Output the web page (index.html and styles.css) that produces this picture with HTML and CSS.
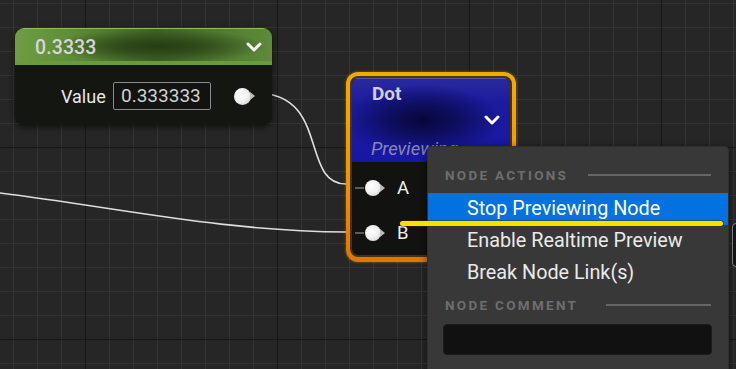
FILE: index.html
```html
<!DOCTYPE html>
<html>
<head>
<meta charset="utf-8">
<link rel="stylesheet" href="styles.css">
</head>
<body>
<div class="canvas">
  <svg class="wires" width="736" height="369" viewBox="0 0 736 369">
    <path d="M256 93 C 330 93, 300 184, 346 184" />
    <path d="M0 193 C 120 208, 220 231, 346 232" />
  </svg>

  <div class="node const-node">
    <div class="node-header green">
      <span class="const-title">0.3333</span>
      <svg class="chevron" width="16" height="10" viewBox="0 0 16 10"><path d="M2 2 L8 8 L14 2" /></svg>
    </div>
    <div class="const-body">
      <span class="value-label">Value</span>
      <span class="value-input">0.333333</span>
      <span class="pin"><span class="pin-ball"></span><span class="pin-arrow"></span></span>
    </div>
  </div>

  <div class="node dot-node">
    <div class="dot-inner">
      <div class="node-header blue">
        <div class="dot-title">Dot</div>
        <div class="chev-row">
          <svg class="chevron" width="16" height="10" viewBox="0 0 16 10"><path d="M2 2 L8 8 L14 2" /></svg>
        </div>
        <div class="dot-sub">Previewing</div>
      </div>
      <div class="dot-body">
        <div class="in-row"><span class="stub"></span><span class="pin"><span class="pin-ball small"></span><span class="pin-arrow"></span></span><span class="pin-label">A</span></div>
        <div class="in-row"><span class="stub"></span><span class="pin"><span class="pin-ball small"></span><span class="pin-arrow"></span></span><span class="pin-label">B</span></div>
      </div>
    </div>
  </div>

  <div class="edge-node"></div>

  <div class="menu">
    <div class="section first"><span class="section-title">NODE ACTIONS</span><span class="section-line"></span></div>
    <div class="item active">Stop Previewing Node</div>
    <div class="item">Enable Realtime Preview</div>
    <div class="item">Break Node Link(s)</div>
    <div class="section second"><span class="section-title">NODE COMMENT</span><span class="section-line"></span></div>
    <div class="comment-box"></div>
    <div class="section third"><span class="section-title">GENERAL</span><span class="section-line"></span></div>
  </div>

  <div class="annotation"></div>
</div>
</body>
</html>
```
FILE: styles.css
```css
* { box-sizing: border-box; }
html, body { margin: 0; padding: 0; }
body {
  width: 736px;
  height: 369px;
  overflow: hidden;
  font-family: Roboto, "Noto Sans", "Liberation Sans", sans-serif;
  background: #262626;
}
.canvas {
  position: relative;
  width: 736px;
  height: 369px;
  overflow: hidden;
  background-color: #262626;
  background-image:
    linear-gradient(to right, #171717 1px, transparent 1px),
    linear-gradient(to bottom, #171717 1px, transparent 1px),
    linear-gradient(to right, #343434 1px, transparent 1px),
    linear-gradient(to bottom, #343434 1px, transparent 1px);
  background-size: 192px 192px, 192px 192px, 24px 24px, 24px 24px;
  background-position: 85px 0, 0 147px, 13px 0, 0 3px;
}
.wires {
  position: absolute;
  left: 0;
  top: 0;
}
.wires path {
  fill: none;
  stroke: #dedede;
  stroke-width: 1.6;
}

.node {
  position: absolute;
}
.chevron path {
  fill: none;
  stroke: #ffffff;
  stroke-width: 3;
  stroke-linecap: round;
  stroke-linejoin: round;
}

/* constant node */
.const-node {
  left: 15px;
  top: 28px;
  width: 257px;
  height: 97px;
  border-radius: 9px;
  background: #141612;
  box-shadow: 0 2px 6px rgba(0,0,0,0.6);
  overflow: hidden;
}
.node-header.green {
  height: 37px;
  display: flex;
  align-items: center;
  justify-content: space-between;
  padding: 0 10px 0 20px;
  border-top: 1px solid #8fba60;
  background:
    radial-gradient(ellipse 42% 48% at 56% 48%, #263d14 0%, #2f4a19 35%, rgba(60,95,35,0) 100%),
    linear-gradient(to right, #6e9e42 0%, #5e8c38 22%, #40632a 55%, #567f34 85%, #5e8a3a 100%);
  box-shadow: inset 0 -4px 0 #6a9a3e;
}
.const-title {
  font-size: 19.5px;
  font-weight: 500;
  color: #d6d6d6;
  letter-spacing: 0.1px;
}
.const-body {
  display: flex;
  align-items: center;
  padding: 17px 0 0 46px;
}
.value-label {
  font-size: 18px;
  color: #e8e8e8;
  width: 52px;
}
.value-input {
  width: 98px;
  height: 28px;
  border: 1px solid #8a8a8a;
  border-radius: 2px;
  font-size: 19px;
  color: #d0d0d0;
  padding-left: 7px;
  line-height: 25px;
  background: #121311;
}
.const-body .pin {
  margin-left: 23px;
}
.pin {
  display: flex;
  align-items: center;
}
.pin-ball {
  width: 17px;
  height: 17px;
  border-radius: 50%;
  background: radial-gradient(circle at 40% 38%, #ffffff 0%, #f2f2f2 45%, #c9c9c9 100%);
}
.pin-ball.small {
  width: 16px;
  height: 16px;
}
.pin-arrow {
  width: 0;
  height: 0;
  border-top: 4px solid transparent;
  border-bottom: 4px solid transparent;
  border-left: 5px solid #bdbdbd;
  margin-left: -1px;
}

/* dot node */
.dot-node {
  left: 346px;
  top: 72px;
  width: 170px;
  height: 190px;
  border-radius: 12px;
  padding: 4px 4px 5px 4px;
  background: linear-gradient(to bottom, #f3a900 0%, #f09a00 50%, #e27400 100%);
  box-shadow: 0 0 3px rgba(240,150,0,0.6);
}
.dot-inner {
  height: 100%;
  border-radius: 8px;
  border: 2px solid #4a3208;
  background: #121310;
  overflow: hidden;
}
.node-header.blue {
  height: 84px;
  padding: 5px 10px 0 20px;
  background:
    radial-gradient(ellipse 50% 42% at 45% 50%, #07073a 0%, #0e0e62 45%, rgba(24,24,150,0) 100%),
    linear-gradient(to bottom, #2a2a9c 0%, #1b1ba0 30%, #1717a2 100%);
  box-shadow: inset 0 1px 0 #5555aa;
}
.dot-title {
  font-size: 19px;
  font-weight: 700;
  color: #cfcfe0;
  line-height: 22px;
}
.chev-row {
  display: flex;
  justify-content: flex-end;
  height: 14px;
  margin-top: 10px;
}
.dot-sub {
  font-size: 18.5px;
  font-style: italic;
  color: #8686b6;
  line-height: 22px;
  margin-top: 9px;
  margin-left: -1px;
}
.dot-body {
  display: flex;
  flex-direction: column;
  gap: 13px;
  padding-top: 10px;
}
.in-row {
  display: flex;
  align-items: center;
  height: 32px;
}
.stub {
  width: 9px;
  height: 2px;
  background: #5c5c5c;
  margin-left: 3px;
  margin-right: 1px;
}
.pin-label {
  font-size: 18.5px;
  color: #f0f0f0;
  margin-left: 12px;
}

.edge-node {
  position: absolute;
  left: 732px;
  top: 223px;
  width: 12px;
  height: 44px;
  border-radius: 4px;
  background: #161616;
  border: 1px solid #8a8a8a;
}

/* context menu */
.menu {
  position: absolute;
  left: 427px;
  top: 146px;
  width: 302px;
  height: 240px;
  background: #383838;
  border: 1px solid #2f2f2f;
  border-radius: 4px;
  box-shadow: 0 2px 8px rgba(0,0,0,0.5);
}
.section {
  display: flex;
  align-items: center;
  height: 20px;
  margin: 0 17px 0 17px;
}
.section.first { margin-top: 18px; margin-bottom: 8px; }
.section.second { margin-top: 6px; }
.section.third { margin-top: 8px; }
.section-title {
  font-size: 13.5px;
  font-weight: 700;
  letter-spacing: 2.3px;
  color: #6e6e6e;
  white-space: nowrap;
}
.section-line {
  flex: 1;
  height: 2px;
  background: #666666;
  margin-left: 20px;
}
.second .section-line { margin-left: 28px; }
.item {
  height: 32px;
  line-height: 32px;
  padding-left: 39px;
  font-size: 19.8px;
  color: #eaeaea;
  white-space: nowrap;
}
.item.active {
  background: #0272e0;
  color: #ffffff;
}
.comment-box {
  margin: 9px 16px 0 15px;
  height: 31px;
  background: #111111;
  border: 1px solid #1c1c1c;
  border-radius: 4px;
}

.annotation {
  position: absolute;
  left: 400px;
  top: 221px;
  width: 323px;
  height: 4.5px;
  border-radius: 3px;
  background: #f7df00;
  box-shadow: 0 0 0 0.7px rgba(60,50,0,0.6);
}
```
